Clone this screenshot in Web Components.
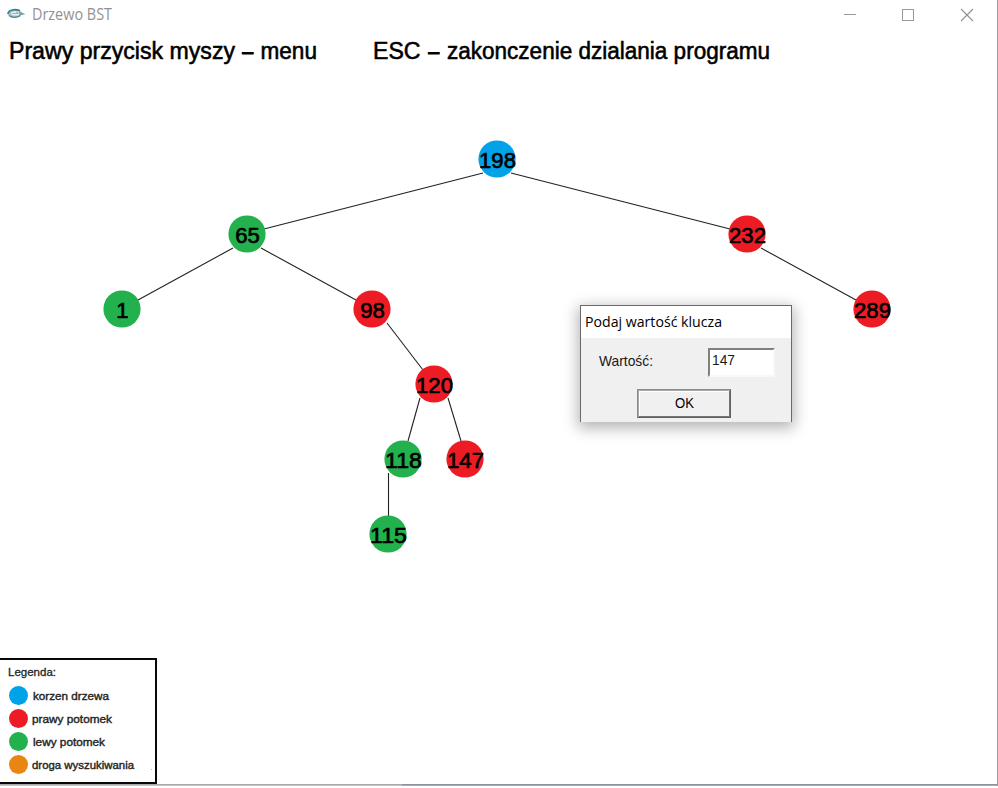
<!DOCTYPE html>
<html lang="pl">
<head>
<meta charset="utf-8">
<title>Drzewo BST</title>
<style>
html, body { margin: 0; background: #fff; }
body { width: 998px; height: 788px; overflow: hidden; }
</style>
</head>
<body>
<bst-app></bst-app>
<script>
const define = (name, html, setup) => customElements.define(name, class extends HTMLElement {
  connectedCallback() {
    if (this.shadowRoot) return;
    const t = document.createElement('template');
    t.innerHTML = typeof html === 'function' ? html(this) : html;
    this.attachShadow({ mode: 'open' }).append(t.content.cloneNode(true));
    if (setup) setup(this);
  }
});

// One line of text with a fixed advance width.
define('fit-text', el => {
  const a = n => el.getAttribute(n);
  return `<style>:host{display:block;flex:none}svg{display:block;overflow:visible}
    text{fill:currentColor;stroke:currentColor;stroke-width:${a('ink') || 0}px;white-space:pre}</style>
    <svg width="${a('width')}" height="${a('height')}"><text x="0" y="${a('base')}" font-size="${a('size')}"
    textLength="${a('width')}" lengthAdjust="spacingAndGlyphs">${el.textContent}</text></svg>`;
});

define('window-bar', `
<style>
:host{display:flex;height:30px;box-sizing:border-box;align-items:flex-start;color:#929292;padding-left:7px;
  font-family:"Open Sans","Noto Sans",sans-serif}
.logo{flex:none;margin:8px 6px 0 0}
fit-text{margin-top:5px}
.controls{display:flex;margin-left:auto;gap:46px;padding:9px 25px 0 0}
svg{display:block}
</style>
<svg class="logo" width="19" height="12" viewBox="0 0 19 12">
 <ellipse cx="7.5" cy="5.5" rx="7" ry="4" fill="#a5c2c9"/>
 <path d="M1 6C1 1.8 8 .5 13 2.8" fill="none" stroke="#2b8490" stroke-width="1.7"/>
 <path d="M2 7.5C5 10 10 9.8 13.5 7.5" fill="none" stroke="#58808c" stroke-width="1.3"/>
 <ellipse cx="8.5" cy="5.4" rx="4.5" ry="2.1" fill="#e5eef0"/>
 <path d="M5 5.5h6M9 4l4 2" fill="none" stroke="#8ba4ad" stroke-width=".8"/>
 <path d="M12 3l6.5 3.2-6 1.3z" fill="#82a2ac"/>
</svg>
<fit-text width="80" height="20" base="15" size="15.5">Drzewo BST</fit-text>
<div class="controls">
<svg width="12" height="12"><path d="M0 5.5h12" stroke="#999"/></svg>
<svg width="12" height="12"><rect x=".5" y=".5" width="11" height="11" fill="none" stroke="#999"/></svg>
<svg width="12" height="12" overflow="visible"><path d="M1 0l12 12M13 0L1 12" stroke="#909090" stroke-width="1.1"/></svg>
</div>`);

// Bold prompt split round a short dash: words, dash, words, each with its start and width.
define('help-text', el => {
  const parts = el.textContent.split(' – ');
  const [w1, x2, w2] = el.getAttribute('cut').split(' ').map(Number);
  return `<style>:host{display:block}svg{display:block;overflow:visible}
  text{font-size:23px;stroke:#000;stroke-width:.55px;white-space:pre}</style>
  <svg width="${x2 + w2}" height="28"><text y="21"><tspan x="0" textLength="${w1}" lengthAdjust="spacingAndGlyphs">${parts[0]}</tspan><tspan
  x="${(w1 + x2) / 2 - 5.5}" textLength="11" lengthAdjust="spacingAndGlyphs" stroke-width="1">–</tspan><tspan x="${x2}"
  textLength="${w2}" lengthAdjust="spacingAndGlyphs">${parts[1]}</tspan></text></svg>`;
});

define('help-line', `
<style>:host{display:flex;gap:56px;height:38px;padding:8px 0 0 9px;box-sizing:border-box;
  font-family:"Liberation Sans",Arial,sans-serif;color:#000}</style>
<help-text cut="226 251.5 56.5">Prawy przycisk myszy – menu</help-text>
<help-text cut="47.5 74 323">ESC – zakonczenie dzialania programu</help-text>`);

define('tree-node', el => {
  const c = { root: '#00a2e8', right: '#ed1c24', left: '#22b14c' }[el.getAttribute('kind')];
  const s = el.textContent, w = s.length * 12.3;
  return `<style>
  :host{position:absolute;width:38px;height:38px;left:${el.getAttribute('x') - 19}px;top:${el.getAttribute('y') - 19}px;
   font-family:"Liberation Sans",Arial,sans-serif}
  svg{display:block;overflow:visible}text{stroke:#000;stroke-width:.7px}</style>
  <svg width="38" height="38"><circle cx="19" cy="19" r="18.6" fill="${c}"/>
  <text x="${19.5 - w / 2}" y="28.4" font-size="22.8" textLength="${w}" lengthAdjust="spacingAndGlyphs">${s}</text></svg>`;
});

define('bst-tree', () => {
  const nodes = [['root',496.7,159,198],['left',246.7,234,65],['right',746.7,234,232],['left',121.7,309,1],
    ['right',371.7,309,98],['right',871.7,309,289],['right',434.2,384,120],['left',403.2,459,118],
    ['right',465.4,459,147],['left',388,534,115]];
  const edges = [[483,173,264,229],[511,173,730,229],[233,248,138,300],[261,248,356,300],[761,248,856,300],
    [387,323,423,370],[420,398,408,441],[448,398,461,441],[388.5,473,388.5,516]];
  return `<style>:host{position:absolute;inset:0}svg{display:block}</style>
  <svg width="998" height="640" stroke="#222" stroke-width="1.1">${edges.map(([a,b,c,d]) =>
    `<line x1="${a}" y1="${b}" x2="${c}" y2="${d}"/>`).join('')}</svg>
  ${nodes.map(([k,x,y,v]) => `<tree-node kind="${k}" x="${x}" y="${y}">${v}</tree-node>`).join('')}`;
});

define('key-dialog', `
<style>
:host{position:absolute;left:580px;top:305px;width:212px;height:117px;box-sizing:border-box;background:#f0f0f0;
 border:1px solid #696969;border-bottom:0;box-shadow:0 4px 14px 2px rgba(0,0,0,.3);color:#000;
 font-family:"Liberation Sans",Arial,sans-serif;display:flex;flex-direction:column}
header{height:32px;background:#fff;padding:5px 0 0 4px;box-sizing:border-box;font-family:"Open Sans","Noto Sans",sans-serif}
.row{display:flex;padding:10px 16px 0 18px;justify-content:space-between;color:#181818}
.row>fit-text{margin-top:3px}
.field{width:67px;height:29px;box-sizing:border-box;background:#fff;border:2px solid;
 border-color:#808080 #f8f8f8 #f8f8f8 #808080;padding:1px 0 0 2px}
.btn{width:94px;height:29px;box-sizing:border-box;margin:12px 0 0 56px;border:1px solid #6b6b6b;
 border-color:#8c8c8c #606060 #606060 #8c8c8c;box-shadow:inset 1px 1px #a8a8a8,inset -1px -1px #747474,inset 2px 2px #fff;padding:4px 0 0 37px}
</style>
<header><fit-text width="137" height="22" base="16" size="15">Podaj wartość klucza</fit-text></header>
<div class="row"><fit-text width="54" height="20" base="14.5" size="14.5">Wartość:</fit-text>
<div class="field"><fit-text width="23" height="20" base="14" size="15">147</fit-text></div></div>
<div class="btn"><fit-text width="19" height="20" base="14" size="15">OK</fit-text></div>`);

define('legend-item', el => `
<style>:host{display:flex;height:23px;align-items:center;gap:${el.getAttribute('gap')}px}
i{width:19px;height:19px;border-radius:50%;background:${el.getAttribute('color')};flex:none}</style>
<i></i><fit-text width="${el.getAttribute('width')}" height="19" base="13.5" size="11.3" ink=".4">${el.textContent}</fit-text>`);

define('tree-legend', `
<style>:host{display:block;width:157px;height:126px;margin-top:auto;box-sizing:border-box;background:#fff;
 border:2px solid #080808;border-left:0;padding:3px 0 0 8.5px;font-family:"Liberation Sans",Arial,sans-serif;color:#252525;
 position:relative}
 .title{margin-left:-1px;height:21px}
 .dot{position:absolute;left:151px;top:109px;width:1px;height:1px;background:#ddb080}</style>
<fit-text class="title" width="48" height="18" base="13" size="11.5" ink=".3">Legenda:</fit-text>
<legend-item color="#00a2e8" width="76" gap="5">korzen drzewa</legend-item>
<legend-item color="#ed1c24" width="80" gap="4">prawy potomek</legend-item>
<legend-item color="#22b14c" width="72" gap="5">lewy potomek</legend-item>
<legend-item color="#e88614" width="102" gap="4">droga wyszukiwania</legend-item>
<span class="dot"></span>`);

define('bst-app', `
<style>
:host{display:flex;flex-direction:column;position:relative;width:998px;height:786px;box-sizing:border-box;background:#fff;
 border-right:1px solid #9a9a9c}
.edge{height:2px;background:linear-gradient(#a9a9a9 50%,#c4c4c4 50%);display:flex;justify-content:flex-end}
.edge i{width:595px;background:linear-gradient(#8b94a0 50%,#a4abb5 50%)}
</style>
<window-bar></window-bar>
<help-line></help-line>
<bst-tree></bst-tree>
<tree-legend></tree-legend>
<div class="edge"><i></i></div>
<key-dialog></key-dialog>`);
</script>
</body>
</html>
